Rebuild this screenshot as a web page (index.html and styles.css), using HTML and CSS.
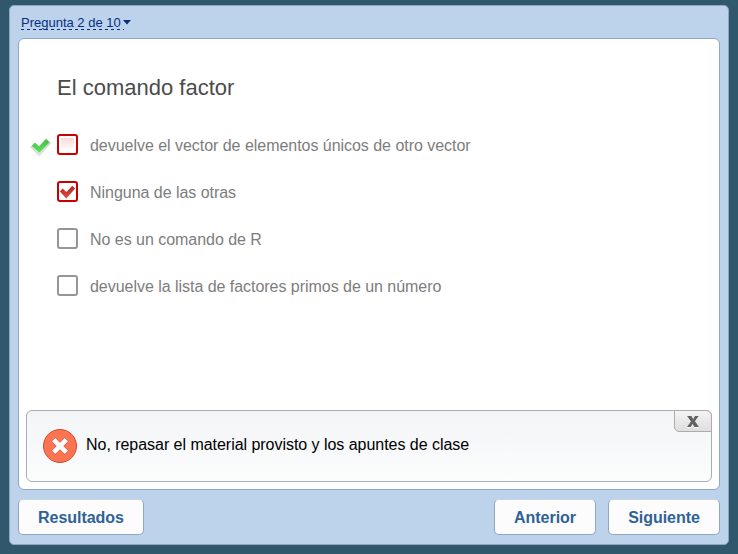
FILE: index.html
```html
<!DOCTYPE html>
<html lang="es">
<head>
<meta charset="utf-8">
<title>El comando factor</title>
<link rel="stylesheet" href="styles.css">
</head>
<body>
<main class="quiz">
  <header class="topbar"><span class="counter">Pregunta 2 de 10</span><svg class="caret" width="8" height="5" viewBox="0 0 8 5"><path d="M0 0h8L4 4.6z" fill="#06307f"/></svg></header>
  <section class="slide">
    <h1 class="question">El comando factor</h1>
    <ul class="answers">
      <li class="answer">
        <svg class="tick correct" width="22" height="20" viewBox="0 0 22 20"><defs><linearGradient id="g" x2="0" y2="1"><stop offset="0" stop-color="#43bd40"/><stop offset="1" stop-color="#62e264"/></linearGradient></defs><path d="M1.3 10.3L5 6.4l4 3.7L16.2 2.4l3.9 3.9L9.2 18z" fill="#fff" stroke="#d6d6d6" stroke-width="1.6" stroke-linejoin="round"/><path d="M1.700 9L5 5.800l4.100 3.800L16.200 2.100l3.300 3.300L9.200 16z" fill="url(#g)"/></svg>
        <span class="box wrong blush"></span><span>devuelve el vector de elementos únicos de otro vector</span>
      </li>
      <li class="answer">
        <span class="tick"></span>
        <span class="box wrong"><svg class="mark" width="17" height="17" viewBox="0 0 17 17"><defs><linearGradient id="r" x2="0" y2="1"><stop offset="0" stop-color="#a92f2a"/><stop offset="1" stop-color="#e24b42"/></linearGradient></defs><path d="M.8 8.400l2.900-3 3.600 3.700 6-6.300L16.200 5.600 7.300 15.500z" fill="url(#r)"/></svg></span><span>Ninguna de las otras</span>
      </li>
      <li class="answer"><span class="tick"></span><span class="box"></span><span>No es un comando de R</span></li>
      <li class="answer"><span class="tick"></span><span class="box"></span><span>devuelve la lista de factores primos de un número</span></li>
    </ul>
    <div class="feedback">
      <svg class="error" width="36" height="36" viewBox="0 0 36 36"><circle cx="18" cy="18" r="16.5" fill="#fd7452" stroke="#cf4c33"/><path d="M11.200 11.200l13.600 13.600M24.800 11.200L11.200 24.800" stroke="#d9573a" stroke-width="5.800"/><path d="M11.600 11.600l12.800 12.800M24.400 11.600L11.600 24.400" stroke="#fff" stroke-width="4.700"/></svg>
      <span class="message">No, repasar el material provisto y los apuntes de clase</span>
      <button class="close" aria-label="Cerrar"><svg width="14" height="13" viewBox="0 0 14 13"><path d="M1 2h4.500L7.200 4.900 9 2h3.700L9 7.300l4 5.700H8.300L6.600 9.900 4.700 13H1l3.900-5.600z" fill="#fff"/><path d="M1 1h4.500L7.200 3.900 9 1h3.700L9 6.300l4 5.700H8.300L6.600 8.900 4.700 12H1l3.900-5.600z" fill="#646464"/></svg></button>
    </div>
  </section>
  <footer class="controls">
    <button class="btn results">Resultados</button>
    <button class="btn previous">Anterior</button>
    <button class="btn next">Siguiente</button>
  </footer>
</main>
</body>
</html>
```
FILE: styles.css
```css
* { box-sizing: border-box; }
body {
  margin: 0;
  height: 554px;
  padding: 5px 9px 9px;
  overflow: hidden;
  background: #30586d;
  font-family: "Liberation Sans", Arial, sans-serif;
}
.quiz {
  display: flex;
  flex-direction: column;
  height: 540px;
  padding: 0 8px;
  border: 1px solid #8ea6c4;
  border-radius: 5px;
  background: #bcd3eb;
}
.topbar {
  display: flex;
  align-items: flex-start;
  height: 32px;
  padding: 9px 0 0 3px;
  color: #06307f;
  font-size: 13px;
  line-height: 16px;
}
.counter {
  height: 15px;
  width: 103px;
  white-space: nowrap;
  background: repeating-linear-gradient(90deg, #06307f 0 3px, transparent 3px 6px) 0 100% / 100% 1px no-repeat;
}
.caret { margin: 5px 0 0 -1px; }
.slide {
  display: flex;
  flex-direction: column;
  height: 452px;
  padding: 0 7px 7px;
  border: 1px solid #8ea6c4;
  border-radius: 6px;
  background: #fff;
}
.question {
  margin: 36px 0 0 31px;
  color: #4c4c4c;
  font-size: 22px;
  font-weight: 400;
  line-height: 26px;
}
.answers {
  margin: 21px 0 0 3px;
  padding: 0;
  list-style: none;
}
.answer {
  display: flex;
  align-items: center;
  height: 47px;
  color: #7d7d7d;
  font-size: 16px;
  letter-spacing: -0.035px;
}
.tick { width: 22px; margin-right: 6px; }
.correct { margin: 2px 5px 0 1px; }
.box {
  display: flex;
  align-items: center;
  justify-content: center;
  width: 21px;
  height: 21px;
  margin: -2px 12px 0 0;
  border: 2px solid #969696;
  border-radius: 3px;
}
.wrong { border-color: #c90000; }
.blush { background: linear-gradient(#fbdad6, #fff) center / 13px 13px no-repeat; }
.mark { flex: none; }
.feedback {
  position: relative;
  display: flex;
  align-items: center;
  height: 72px;
  margin-top: auto;
  padding: 0 0 0 15px;
  border: 1px solid #acacac;
  border-radius: 6px;
  background: linear-gradient(#f4f5f7, #fbfcfc);
  color: #000;
  font-size: 16px;
}
.error { margin-right: 8px; }
.message { margin-top: -2px; letter-spacing: -0.035px; }
.close {
  position: absolute;
  top: -1px;
  right: -1px;
  display: flex;
  align-items: center;
  justify-content: center;
  width: 38px;
  height: 22px;
  padding: 0;
  border: 1px solid #acacac;
  border-radius: 0 6px 0 5px;
  background: linear-gradient(#f4f4f4, #dedede);
}
.controls {
  display: flex;
  gap: 12px;
  padding: 9px 0 0;
}
.btn {
  height: 36px;
  padding: 2px 0 0;
  border: 1px solid #8fa5c3;
  border-top-color: #c4d5e8;
  border-radius: 5px;
  background: #fcfcfd;
  color: #2f6296;
  font: bold 16px "Liberation Sans", Arial, sans-serif;
  letter-spacing: -0.03px;
}
.results { width: 126px; margin-right: auto; }
.previous { width: 102px; }
.next { width: 112px; }
```
